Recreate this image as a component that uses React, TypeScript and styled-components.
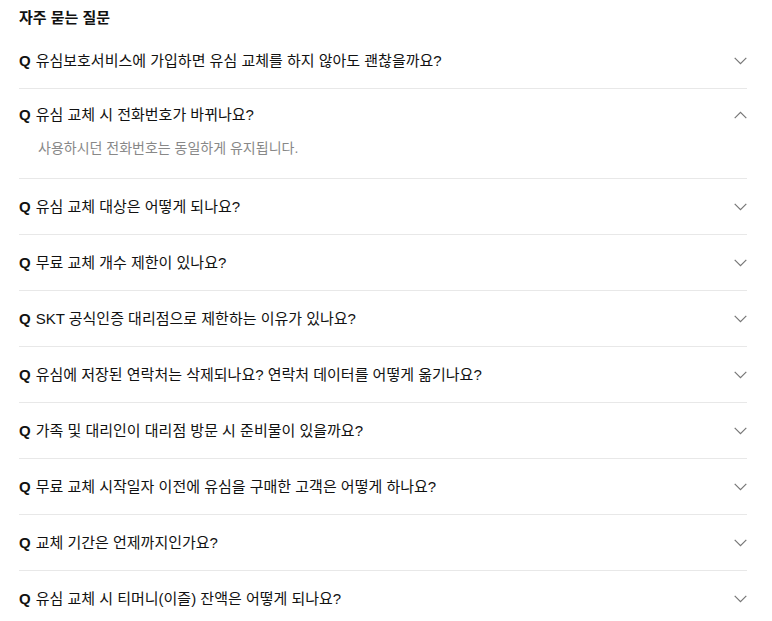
import React, { useState } from "react";
import styled, { createGlobalStyle } from "styled-components";

const GlobalStyle = createGlobalStyle`
  html, body { margin: 0; padding: 0; background: #fff; }
  body { font-family: "Liberation Sans", "Noto Sans CJK KR", Arial, sans-serif; }
  * { box-sizing: border-box; }
`;

const Page = styled.div`
  padding: 8px 25px 0 19px;
  width: 772px;
`;

const Title = styled.h2`
  margin: 0 0 5px;
  font-size: 15px;
  line-height: 20px;
  font-weight: 700;
  color: #111;
`;

const List = styled.div`
  display: flex;
  flex-direction: column;
`;

const Item = styled.div`
  border-bottom: 1px solid #e8e8e8;
  &:last-child { border-bottom: none; }
`;

const Header = styled.button<{ $open: boolean }>`
  display: flex;
  align-items: center;
  justify-content: space-between;
  width: 100%;
  border: none;
  background: none;
  margin: 0;
  padding: ${(p) => (p.$open ? "15px 0 12px" : "17px 0 16px")};
  font-family: inherit;
  font-size: 15px;
  line-height: 22px;
  color: #111;
  text-align: left;
  cursor: pointer;
`;

const QText = styled.span`
  display: flex;
  gap: 5px;
`;

const QMark = styled.span`
  font-weight: 700;
  font-family: "Liberation Sans", Arial, sans-serif;
`;

const Answer = styled.div`
  padding: 0 0 20px 19px;
  font-size: 14px;
  line-height: 20px;
  color: #888;
`;

const Chevron = styled.svg`
  flex: none;
  width: 13px;
  height: 8px;
`;

const faqs = [
  "유심보호서비스에 가입하면 유심 교체를 하지 않아도 괜찮을까요?",
  "유심 교체 시 전화번호가 바뀌나요?",
  "유심 교체 대상은 어떻게 되나요?",
  "무료 교체 개수 제한이 있나요?",
  "SKT 공식인증 대리점으로 제한하는 이유가 있나요?",
  "유심에 저장된 연락처는 삭제되나요? 연락처 데이터를 어떻게 옮기나요?",
  "가족 및 대리인이 대리점 방문 시 준비물이 있을까요?",
  "무료 교체 시작일자 이전에 유심을 구매한 고객은 어떻게 하나요?",
  "교체 기간은 언제까지인가요?",
  "유심 교체 시 티머니(이즐) 잔액은 어떻게 되나요?",
];

const answers: Record<number, string> = {
  1: "사용하시던 전화번호는 동일하게 유지됩니다.",
};

export default function App() {
  const [open, setOpen] = useState<number | null>(1);
  return (
    <>
      <GlobalStyle />
      <Page>
        <Title>자주 묻는 질문</Title>
        <List>
          {faqs.map((q, i) => {
            const isOpen = open === i;
            return (
              <Item key={i}>
                <Header $open={isOpen} onClick={() => setOpen(isOpen ? null : i)}>
                  <QText>
                    <QMark>Q</QMark>
                    <span>{q}</span>
                  </QText>
                  <Chevron viewBox="0 0 13 8">
                    <polyline
                      points={isOpen ? "0.7,7.2 6.5,1.4 12.3,7.2" : "0.7,0.8 6.5,6.6 12.3,0.8"}
                      fill="none"
                      stroke="#777"
                      strokeWidth="1.2"
                    />
                  </Chevron>
                </Header>
                {isOpen && answers[i] && <Answer>{answers[i]}</Answer>}
              </Item>
            );
          })}
        </List>
      </Page>
    </>
  );
}
